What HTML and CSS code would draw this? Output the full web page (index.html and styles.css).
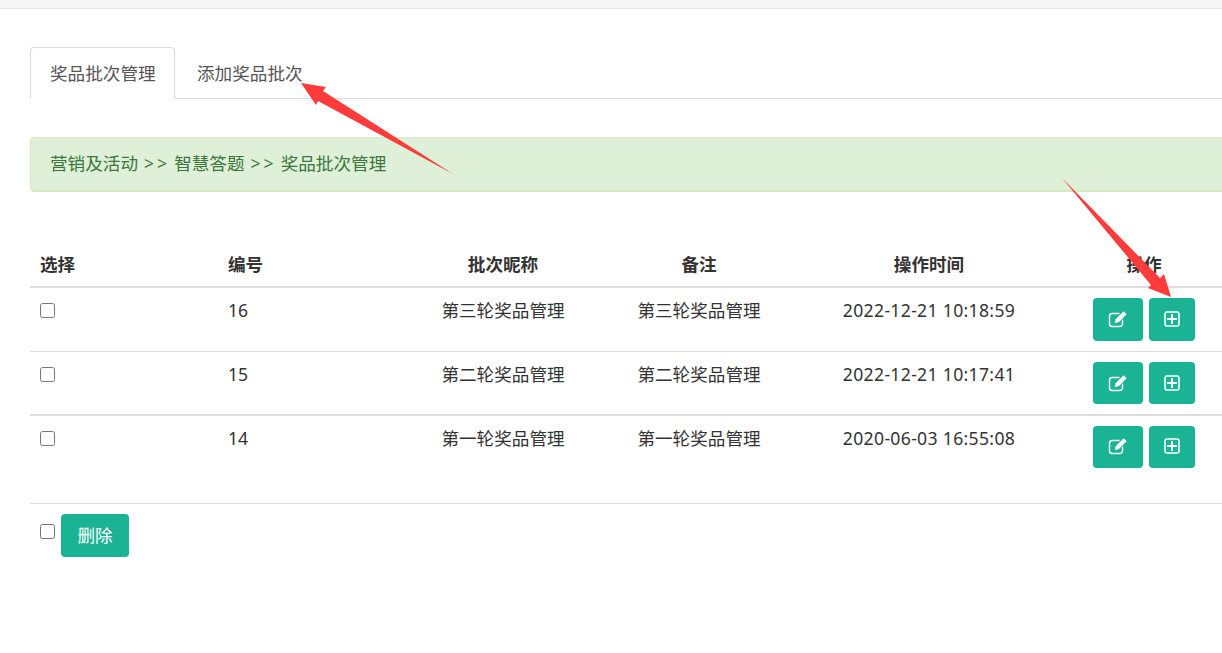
FILE: index.html
```html
<!DOCTYPE html>
<html lang="zh">
<head>
<meta charset="utf-8">
<title>奖品批次管理</title>
<link rel="stylesheet" href="styles.css">
</head>
<body>
<div class="topbar"></div>
<main class="content">
  <ul class="tabs">
    <li class="tab active">奖品批次管理</li>
    <li class="tab">添加奖品批次</li>
  </ul>
  <div class="alert">营销及活动<span class="sep">&gt;&gt;</span>智慧答题<span class="sep">&gt;&gt;</span>奖品批次管理</div>
  <table class="grid">
    <colgroup>
      <col class="c1"><col class="c2"><col class="c3"><col class="c4"><col class="c5"><col class="c6">
    </colgroup>
    <thead>
      <tr><th>选择</th><th>编号</th><th class="mid">批次昵称</th><th class="mid">备注</th><th class="mid">操作时间</th><th class="mid">操作</th></tr>
    </thead>
    <tbody>
      <tr>
        <td><input type="checkbox"></td><td>16</td><td class="mid">第三轮奖品管理</td><td class="mid">第三轮奖品管理</td><td class="mid date">2022-12-21 10:18:59</td>
        <td class="mid ops">
          <button class="btn icon wide"><svg viewBox="0 0 20 18" width="20" height="18"><use href="#edit"/></svg></button><button class="btn icon"><svg viewBox="0 0 16 16" width="16" height="16"><use href="#plus"/></svg></button>
        </td>
      </tr>
      <tr class="thick">
        <td><input type="checkbox"></td><td>15</td><td class="mid">第二轮奖品管理</td><td class="mid">第二轮奖品管理</td><td class="mid date">2022-12-21 10:17:41</td>
        <td class="mid ops">
          <button class="btn icon wide short"><svg viewBox="0 0 20 18" width="20" height="18"><use href="#edit"/></svg></button><button class="btn icon short"><svg viewBox="0 0 16 16" width="16" height="16"><use href="#plus"/></svg></button>
        </td>
      </tr>
      <tr>
        <td><input type="checkbox"></td><td>14</td><td class="mid">第一轮奖品管理</td><td class="mid">第一轮奖品管理</td><td class="mid date">2020-06-03 16:55:08</td>
        <td class="mid ops">
          <button class="btn icon wide short"><svg viewBox="0 0 20 18" width="20" height="18"><use href="#edit"/></svg></button><button class="btn icon short"><svg viewBox="0 0 16 16" width="16" height="16"><use href="#plus"/></svg></button>
        </td>
      </tr>
    </tbody>
  </table>
  <div class="footer-row">
    <input type="checkbox" class="foot-check">
    <button class="btn del">删除</button>
  </div>
</main>
<svg class="defs" width="0" height="0">
  <defs>
    <g id="edit">
      <path d="M14.5 9.5v4.2a2.8 2.8 0 0 1-2.8 2.8H4.3a2.8 2.8 0 0 1-2.8-2.8V6.3a2.8 2.8 0 0 1 2.8-2.8h7.2" fill="none" stroke="#fff" stroke-width="1.5"/>
      <path d="M15.6 1.2l3 3-8 8.1-3.8.8.8-3.9z" fill="#fff"/>
    </g>
    <g id="plus">
      <rect x="1" y="1" width="14" height="14" rx="2" fill="none" stroke="#fff" stroke-width="1.5"/>
      <path d="M8 3v10M3 8h10" fill="none" stroke="#fff" stroke-width="1.8"/>
    </g>
  </defs>
</svg>
<svg class="arrows" width="1222" height="653" viewBox="0 0 1222 653">
  <polygon points="301,83 326,87 323,91 453,174 318,101 316,105" fill="#ff3b3b"/>
  <polygon points="1171,297 1148,288 1151,285 1062,178 1160,278 1164,274" fill="#ff3b3b"/>
</svg>
</body>
</html>
```
FILE: styles.css
```css
* { box-sizing: border-box; }
html, body { margin: 0; padding: 0; height: 100%; overflow: hidden; background: #fff; }
body {
  width: 1222px;
  position: relative;
  font-family: "Noto Sans", "Noto Sans CJK SC", sans-serif;
  font-size: 17.6px;
  color: #333;
}
.topbar { height: 9px; background: #f7f7f7; border-bottom: 1px solid #e7e7e7; }
.content { width: 1197px; margin-left: 30px; padding-top: 38px; }
.tabs { list-style: none; margin: 0; padding: 0; display: flex; border-bottom: 1px solid #ddd; height: 52px; }
.tab {
  height: 52px;
  padding: 0 21px;
  line-height: 50px;
  color: #555;
  white-space: nowrap;
  border: 1px solid transparent;
  border-radius: 4px 4px 0 0;
}
.tab.active { width: 145px; padding: 0 0 0 19px; background: #fff; border-color: #ddd #ddd #fff; }
.alert {
  margin-top: 38px;
  height: 55px;
  padding: 0 19px;
  line-height: 50px;
  background: #dff0d8;
  border: 1px solid #d6e9c6;
  border-bottom-width: 2px;
  border-radius: 4px;
  color: #3c763d;
  white-space: nowrap;
}
.sep { margin: 0 4px 0 6px; letter-spacing: 3px; }
.grid { margin-top: 50px; width: 1197px; table-layout: fixed; border-collapse: collapse; }
.c1 { width: 188px; } .c2 { width: 187px; } .c3 { width: 196px; }
.c4 { width: 196px; } .c5 { width: 264px; } .c6 { width: 166px; }
.grid th { height: 45px; padding: 0 10px; text-align: left; font-weight: 700; border-bottom: 2px solid #ddd; line-height: 44px; }
.grid td { height: 64px; padding: 10px; vertical-align: top; line-height: 25px; border-bottom: 1px solid #ddd; white-space: nowrap; }
.grid tbody tr.thick td { height: 63px; border-bottom: 2px solid #ddd; }
.grid tbody tr.thick .ops { padding-bottom: 8px !important; }
.grid tbody tr:last-child td { height: 89px; border-bottom: 1px solid #ddd; }
.grid .mid { text-align: center; }
.grid .date { letter-spacing: 0.32px; }
.grid input { margin: 5px 0 0; }
input[type="checkbox"] { width: 15px; height: 15px; display: block; }
.ops { padding: 10px 0 !important; }
.btn {
  font: inherit;
  border: 0;
  border-radius: 4px;
  background: #1ab394;
  color: #fff;
  padding: 0;
  display: inline-flex;
  align-items: center;
  justify-content: center;
  vertical-align: top;
}
.btn.icon { width: 46px; height: 43px; padding-bottom: 1px; }
.btn.icon.short { height: 42px; }
.btn.icon.wide { width: 50px; margin-right: 6px; }
.footer-row { display: flex; align-items: flex-start; padding-top: 10px; }
.foot-check { margin: 10px 6px 0 10px; }
.btn.del { width: 68px; height: 43px; padding-bottom: 2px; }
.defs { position: absolute; }
.arrows { position: absolute; left: 0; top: 0; pointer-events: none; }
```
